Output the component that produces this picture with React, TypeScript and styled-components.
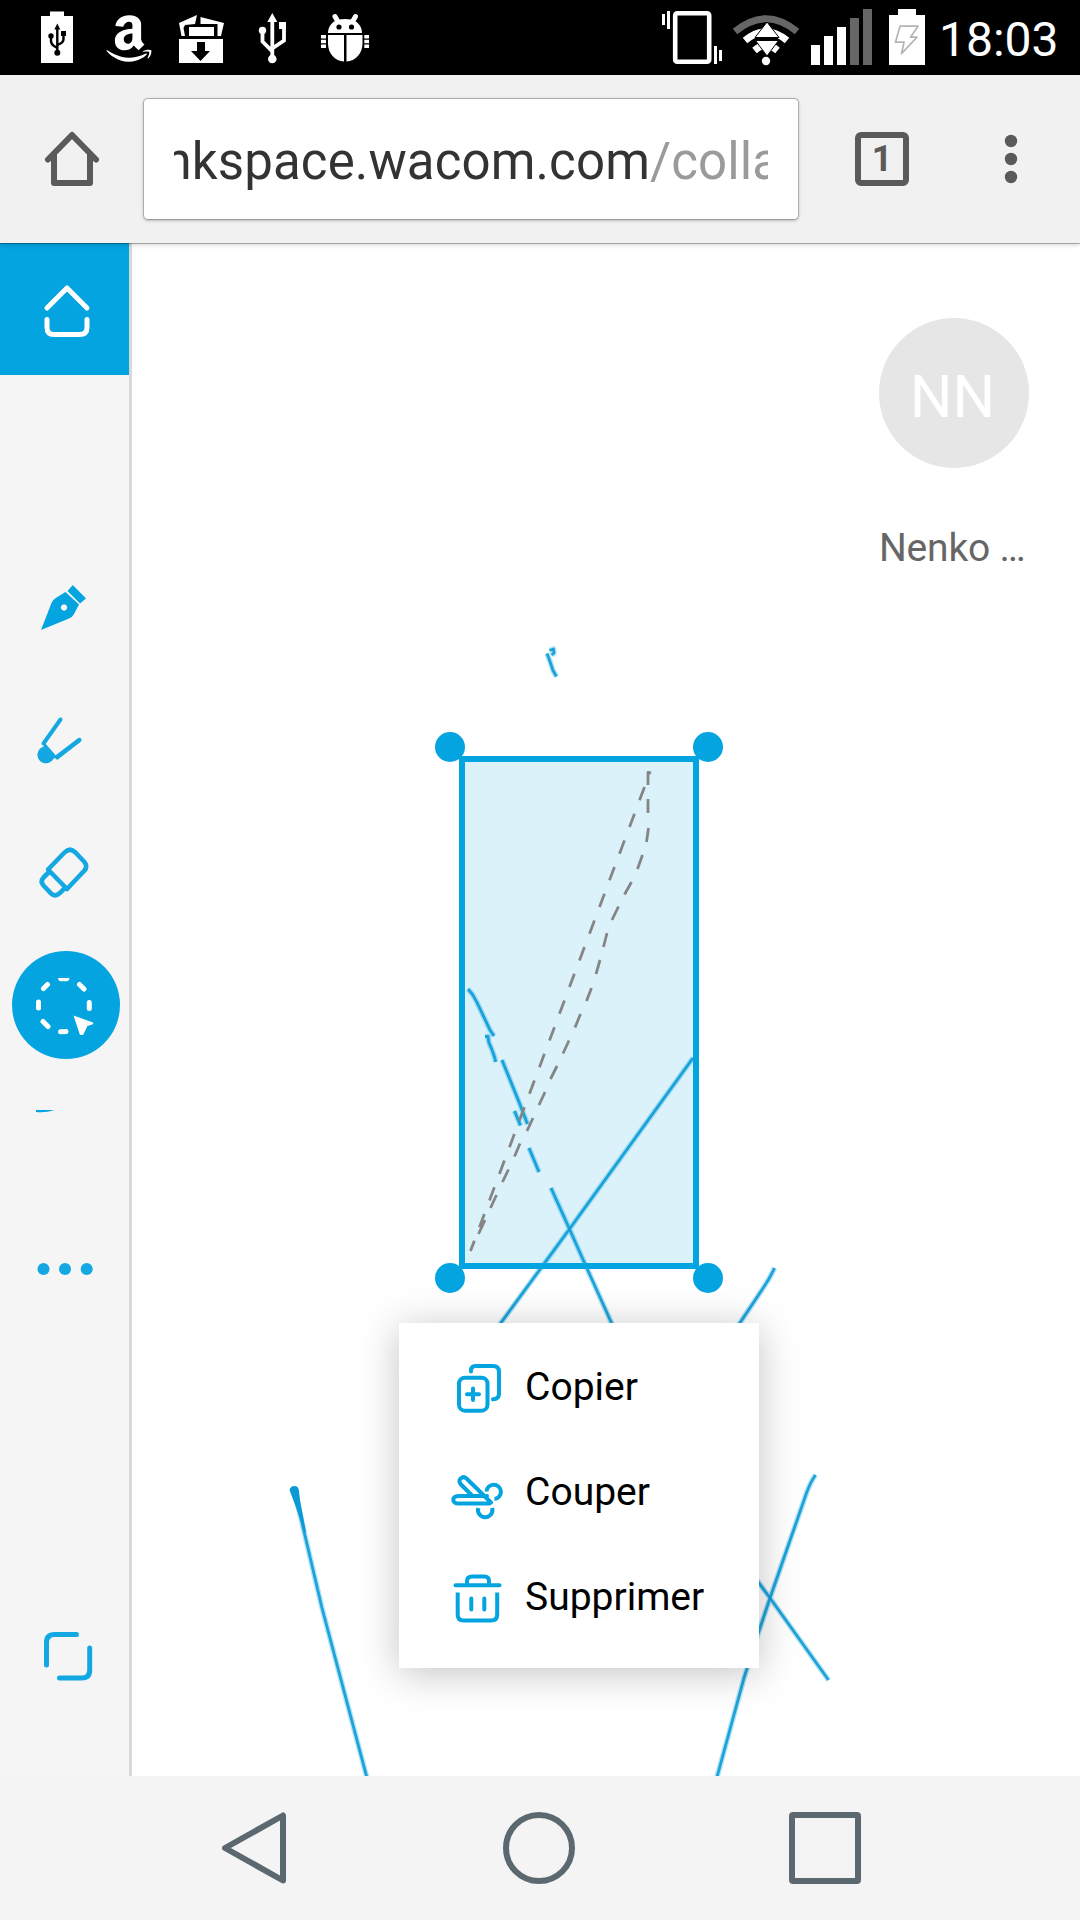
import React from "react";
import styled, { createGlobalStyle } from "styled-components";
import { FaAmazon } from "react-icons/fa";

const BLUE = "#04a4e0";

const GlobalStyle = createGlobalStyle`
  * { box-sizing: border-box; }
  body { margin: 0; background: #fff; font-family: Roboto, "Noto Sans", sans-serif; }
  button { border: 0; padding: 0; background: none; font: inherit; }
  svg { display: block; flex: none; }
`;

const Screen = styled.div`
  width: 1080px;
  height: 1920px;
  display: flex;
  flex-direction: column;
  overflow: hidden;
`;

const StatusBar = styled.header`
  height: 75px;
  flex: none;
  display: flex;
  justify-content: space-between;
  background: #000;
  color: #fff;
`;

const StatusGroup = styled.div`
  display: flex;
  align-items: flex-start;
`;

const AmazonSlot = styled.div`
  width: 72px;
  height: 75px;
  flex: none;
  display: flex;
  align-items: flex-start;
  justify-content: center;
  padding: 12px 24px 0 0;

  svg {
    width: 50px;
    height: 53px;
  }
`;

const Clock = styled.time`
  width: 142px;
  padding-left: 1px;
  font-size: 48px;
  line-height: 79px;
  white-space: nowrap;
`;

const Toolbar = styled.div`
  height: 168px;
  flex: none;
  display: flex;
  align-items: center;
  background: #f1f1f1;
  box-shadow: 0 1px 0 rgba(0, 0, 0, 0.25), 0 1px 5px rgba(0, 0, 0, 0.25);
  position: relative;
  z-index: 2;
`;

const ToolbarButton = styled.button<{ $width: number }>`
  width: ${(p) => p.$width}px;
  height: 168px;
  display: flex;
  align-items: center;
  justify-content: center;
`;

const AddressBar = styled.div`
  width: 656px;
  height: 122px;
  padding: 0 30px;
  display: flex;
  align-items: center;
  background: #fff;
  border: 1px solid #adadad;
  border-bottom-color: #999;
  border-radius: 5px;
  box-shadow: 0 1px 3px rgba(0, 0, 0, 0.22);
`;

const UrlWindow = styled.div`
  flex: 1;
  overflow: hidden;
  white-space: nowrap;
  font-size: 51px;
  letter-spacing: 0.12px;
  line-height: 70px;
  color: #333;
  padding-top: 6px;
`;

const UrlText = styled.div`
  margin-left: -23px;
`;

const UrlPath = styled.span`
  color: #9a9a9a;
`;

const TabCount = styled.div`
  width: 54px;
  height: 54px;
  display: flex;
  align-items: center;
  justify-content: center;
  border: 6px solid #5a5a5a;
  border-radius: 6px;
  color: #5a5a5a;
  font-size: 36px;
  font-weight: 700;
  line-height: 42px;
`;

const Workspace = styled.main`
  flex: 1;
  display: flex;
  min-height: 0;
`;

const Sidebar = styled.nav`
  width: 132px;
  flex: none;
  display: flex;
  flex-direction: column;
  background: #f5f5f5;
  border-right: 3px solid #d8d8d8;
`;

const ToolButton = styled.button<{ $height: number; $active?: boolean }>`
  width: 129px;
  height: ${(p) => p.$height}px;
  flex: none;
  background: ${(p) => (p.$active ? BLUE : "transparent")};
`;

const SidebarGap = styled.div<{ $height: number }>`
  height: ${(p) => p.$height}px;
  flex: none;
`;

const Board = styled.section`
  flex: 1;
  position: relative;
  background: #fff;
`;

const Drawing = styled.svg`
  position: absolute;
  inset: 0;
`;

const Profile = styled.div`
  width: 150px;
  margin: 75px 51px 0 auto;
  display: flex;
  flex-direction: column;
  gap: 55px;
`;

const Avatar = styled.div`
  width: 150px;
  height: 150px;
  border-radius: 50%;
  display: flex;
  align-items: center;
  justify-content: center;
  padding: 8px 3px 0 0;
  background: #e6e6e6;
  color: #fff;
  font-size: 60px;
  line-height: 70px;
`;

const UserName = styled.div`
  color: #666;
  font-size: 39px;
  letter-spacing: -0.2px;
  line-height: 50px;
  white-space: nowrap;
`;

const Selection = styled.div`
  position: absolute;
  left: 327px;
  top: 513px;
  width: 240px;
  height: 513px;
  border: 6px solid ${BLUE};
`;

const Handle = styled.i<{ $right?: boolean; $bottom?: boolean }>`
  position: absolute;
  ${(p) => (p.$right ? "right" : "left")}: -30px;
  ${(p) => (p.$bottom ? "bottom" : "top")}: -30px;
  width: 30px;
  height: 30px;
  border-radius: 50%;
  background: ${BLUE};
`;

const ContextMenu = styled.div`
  position: absolute;
  left: 267px;
  top: 1080px;
  width: 360px;
  height: 345px;
  padding: 12px 0 0 48px;
  background: #fff;
  box-shadow: 0 5px 38px rgba(0, 0, 0, 0.24);
`;

const MenuItem = styled.button`
  width: 100%;
  height: 105px;
  display: flex;
  align-items: center;
  gap: 18px;
  color: #000;
  font-size: 39px;
  line-height: 51px;
`;

const NavBar = styled.footer`
  height: 144px;
  flex: none;
  display: flex;
  align-items: center;
  justify-content: center;
  gap: 214px;
  padding-right: 2px;
  background: #f4f4f4;
`;

const UsbBattery = () => (
  <svg width="105" height="75" viewBox="0 0 105 75">
    <path d="M50 11.5h14V16h9v47H41V16h9z" fill="#fff" />
    <g fill="none" stroke="#000" strokeWidth="2.4">
      <path d="M57.3 28v25M51 37v4q0 3 3 5l3.3 2M63.5 34v5q0 3-3 4.500l-3.200 1.500" />
    </g>
    <g fill="#000">
      <path d="M57.300 23.500l3 6h-6zM61 31h5v5h-5z" />
      <circle cx="51" cy="36" r="2.700" />
      <circle cx="57.300" cy="52.700" r="3" />
    </g>
  </svg>
);

const DownloadBox = () => (
  <svg width="60" height="75" viewBox="177 0 60 75">
    <g fill="#fff">
      <path d="M179 23l18-8-2 9-10 1-1.500 3L185 36h-3.500zM200.500 17l23.500 6-3 13h-3.500V24h-17z" />
      <path d="M189 27h25v9h-25zM179 39h44v24h-44z" />
    </g>
    <path d="M197 42h8v9h5l-9.500 10-9.500-10h6z" fill="#000" />
  </svg>
);

const UsbIcon = () => (
  <svg width="77" height="75" viewBox="237 0 77 75">
    <g fill="none" stroke="#fff" strokeWidth="3.800">
      <path d="M272.300 20v38M262.500 31v10.500l9.800 9.800M284 27v13.500l-11.700 8" />
    </g>
    <g fill="#fff">
      <path d="M272.300 13l5 9h-10zM279 22h7v7h-7z" />
      <circle cx="262.500" cy="30.500" r="3.700" />
      <circle cx="272.300" cy="59" r="4.300" />
    </g>
  </svg>
);

const BugIcon = () => (
  <svg width="56" height="75" viewBox="314 0 56 75">
    <g stroke="#fff" strokeWidth="5" strokeLinecap="round">
      <path d="M335 16.500l3.500 6M355.500 16.500l-3.500 6" />
    </g>
    <g fill="#fff">
      <path d="M328 33c0-8 6-12.500 11-13.500 4-.8 8-.8 12 0 5 1 11 5.500 11 13.500z" />
      <path d="M328 35h16v26.500c-9-.5-16-8-16-18zM346.500 35h16v8.500c0 10-7 17.500-16 18z" />
      <path d="M321 35h5v3.500h-5zM321 39.800h5v3.500h-5zM321 44.600h5V48h-5zM364.300 35h4.700v3.500h-4.700zM364.300 39.800h4.700v3.500h-4.700zM364.300 44.600h4.700V48h-4.700z" />
    </g>
    <circle cx="339" cy="27" r="2.600" />
    <circle cx="351.500" cy="27" r="2.600" />
  </svg>
);

const SystemIcons = () => (
  <svg width="282" height="75" viewBox="656 0 282 75">
    <rect x="675.200" y="13.200" width="34" height="48.600" rx="2" fill="none" stroke="#fff" strokeWidth="4.600" />
    <path d="M662 14h3v11h-3zM667 11h3v18h-3zM714 46h3v18h-3zM719 50h3v11h-3z" fill="#fff" />
    <path d="M735 31.500q31-25.500 62 0" fill="none" stroke="#666" strokeWidth="7" />
    <path d="M745 40.500q21-17.500 42 0" fill="none" stroke="#fff" strokeWidth="7" />
    <path d="M754.500 50.500q11.500-10 23 0" fill="none" stroke="#fff" strokeWidth="7" />
    <path d="M756 37.500h22v3.500h-22z" />
    <path d="M767 22l12 15.500h-24zM755.500 40.500h23L767 56z" fill="#fff" stroke="#000" />
    <circle cx="766" cy="61" r="4.200" fill="#fff" />
    <path d="M811 45h9v20h-9zM824 36h9v29h-9zM837 27h9v38h-9z" fill="#fff" />
    <path d="M850 18h9v47h-9zM863 9h9v56h-9z" fill="#666" />
    <path d="M898 9h18v6h9v50h-36V15h9z" fill="#fff" />
    <path d="M900 26.200h18l-7.500 11h6.500l-15.500 16.500 2.500-11.500h-8.500z" fill="none" stroke="#b5b5b5" strokeWidth="1.700" strokeLinejoin="round" />
  </svg>
);

const StrokeIcon = styled.svg.attrs({ fill: "none", strokeLinecap: "round", strokeLinejoin: "round" })<{
  $color?: string;
}>`
  stroke: ${(p) => p.$color ?? "#14a8e2"};
`;

const CopyIcon = () => (
  <StrokeIcon $color={BLUE} width="60" height="57" viewBox="447 1359 60 57" strokeWidth="4">
    <rect x="459" y="1377.700" width="28.500" height="33" rx="6" />
    <path d="M471 1371.500v-1q0-4.500 4.500-4.500h17.500q6 0 6 6v22q0 5-6 5.300" />
    <path d="M473 1388.500v11.500M467 1394.300h12" />
  </StrokeIcon>
);

const CutIcon = () => (
  <StrokeIcon $color={BLUE} width="60" height="57" viewBox="447 1464 60 57" strokeWidth="4">
    <path d="M491 1502.500l-24.500-24c-4-3.500-9.500 1.500-6 5.500l11.500 11.500M487 1496h-28.500c-7 0-7 7.500 0 7.500h31" />
    <path d="M486.500 1491.500a7.200 7.200 0 1 1 8 7.500M478.300 1508a7.200 7.200 0 1 0 13.800 0" strokeLinecap="butt" />
  </StrokeIcon>
);

const TrashIcon = () => (
  <StrokeIcon $color={BLUE} width="60" height="57" viewBox="447 1569 60 57" strokeWidth="4">
    <path d="M455.500 1585.300h44M467 1584v-3q0-4.500 5-4.500h12.500q4.500 0 4.500 4.500v3" />
    <path d="M457.700 1592.500v22q0 6 6 6h27.500q6 0 6-6v-22" strokeLinecap="butt" />
    <path d="M471.300 1598.500v11M484.300 1598.500v11" />
  </StrokeIcon>
);

const HomeTool = () => (
  <StrokeIcon $color="#fff" width="129" height="132" viewBox="0 243 129 132" strokeWidth="5">
    <path d="M47 308l20-20 20 20M47 319.500v8q0 7 7 7h25.500q7.500 0 7.500-7v-8" />
  </StrokeIcon>
);

const PenTool = () => (
  <svg width="129" height="134" viewBox="0 540 129 134" fill={BLUE}>
    <path fillRule="evenodd" d="M41 630l10.500-27q1.500-3.500 5-5.500l9-5.500L79 604.500l-5 9.500q-1.500 3-5 4.500zM64 604.300a3.200 3.200 0 1 0 .1 0z" />
    <path d="M72.800 585L86 598.400l-6 5.100L67.500 591z" />
  </svg>
);

const BrushTool = () => (
  <StrokeIcon width="129" height="132" viewBox="0 674 129 132" strokeWidth="4">
    <path d="M60.500 719.500L43.500 743.500M57.500 757.300L79.500 740" />
    <path d="M57 757L79 740.200" strokeWidth="4.500" />
    <path d="M44.500 742.500l12.500 14.200-3.500 2a8.500 8.500 0 1 1-10-12z" fill="#14a8e2" stroke="none" />
  </StrokeIcon>
);

const EraserTool = () => (
  <StrokeIcon width="129" height="134" viewBox="0 806 129 134" strokeWidth="4.600">
    <path d="M48 869.500l16.500-17q5.500-5.500 11 0l8.500 9q4.500 5 0 9.500l-17 18z" />
    <path d="M49.500 871.500l-6 6q-3.500 4 0 8l7.500 7.800q4 4 8.500 0l5.500-5.300" />
  </StrokeIcon>
);

const SelectTool = () => (
  <svg width="129" height="130" viewBox="0 940 129 130">
    <circle cx="66" cy="1005" r="54" fill={BLUE} />
    <g stroke="#fff" strokeWidth="5" strokeLinecap="round" fill="none">
      <path d="M60.500 1031.800l5.500-.2M38.500 1002v6M89.300 1002.500v6M79.500 984.500l4.500 4.500M47.500 984.500l-4 4M43 1021.500l5 5" />
    </g>
    <path d="M58 978h11.500q-.5 3.200-3 3.200h-5.500q-2.500 0-3-3.200z" fill="#fff" />
    <path d="M73.500 1015.500l19.500 7q.8 2-1 2l-4.500 1.500-4.500 9h-3z" fill="#fff" />
  </svg>
);

const LineTool = () => (
  <svg width="129" height="133" viewBox="0 1070 129 133" fill={BLUE}>
    <path d="M36 1110h18.500q-9 3-18.500 2z" />
  </svg>
);

const MoreTool = () => (
  <svg width="129" height="132" viewBox="0 1203 129 132" fill="#14a8e2">
    <circle cx="43.500" cy="1269" r="6" />
    <circle cx="65" cy="1269" r="6" />
    <circle cx="86.700" cy="1269" r="6" />
  </svg>
);

const ExpandTool = () => (
  <StrokeIcon width="129" height="132" viewBox="0 1590 129 132" strokeWidth="5">
    <path d="M76.500 1634.600H54.500q-8 0-8 8V1665M89.700 1648v22q0 8-8 8H59.500" />
  </StrokeIcon>
);

const inkStrokes = [
  "M547 653.500l3 8 3 9 3.500 6M549.500 650.500l4-1.500.5 4-2.500 2",
  "M468 989q5.500 5.500 9 13.500L490 1030l4 6M485 1036.500l3 0q0 6 3.500 12l3.500 10 .5 3.500M502 1060l17 42 8.500 22M514.500 1111l6 14.500M529 1148l10 24",
  "M551 1188L569.500 1229L585 1264L612 1324",
  "M693 1058L569.500 1229L500 1324",
  "M774.500 1268q-5 11-12 21l-24 36",
  "M815.500 1475q-5 7-9 18L770 1598L758 1634L744 1678L717 1777",
  "M735 1550L770 1598L828.500 1680",
  "M295 1493L322 1608L367 1778",
];

// Start and end of every dash of the lasso's freehand side.
const lassoDashes = [
  [648, 799, 648, 813],
  [648.5, 828, 646.5, 842],
  [642.5, 855, 637.5, 869],
  [631.5, 882, 624.5, 894.5],
  [618.5, 906.5, 612, 920],
  [607, 933, 603.5, 947],
  [600, 960, 596, 974],
  [591.5, 988, 586.5, 1001],
  [580.5, 1014, 575, 1027.5],
  [569, 1040.5, 563, 1053.5],
  [557, 1066, 550.5, 1079],
  [545, 1092, 539, 1105],
  [533, 1118, 527, 1131],
  [520, 1143.5, 514.5, 1156.500],
  [508.5, 1169.5, 502.5, 1182],
  [496.5, 1195, 490.5, 1208],
  [485, 1220, 478.5, 1234],
];

const lassoPath =
  "M651 773l-3-.5v12.500" + lassoDashes.map(([x1, y1, x2, y2]) => `M${x1} ${y1}L${x2} ${y2}`).join("");

const BoardDrawing = () => (
  <Drawing width="948" height="1533" viewBox="132 243 948 1533" fill="none" strokeLinejoin="round">
    <g stroke={BLUE} strokeWidth="5.500" opacity="0.3">
      {inkStrokes.map((d) => (
        <path key={d} d={d} />
      ))}
    </g>
    <g stroke="#0c9ad6" strokeWidth="2.800" strokeOpacity="0.9">
      {inkStrokes.map((d) => (
        <path key={d} d={d} />
      ))}
    </g>
    <path d="M289.500 1490q1-4 5-4 4 0 4.500 5l1 9 6 32h-1.500l-9-26z" fill="#0c9ad6" />
    <rect x="459" y="756" width="240" height="513" fill={BLUE} fillOpacity="0.14" />
    <g stroke="#858585" strokeWidth="2.800">
      <path d={lassoPath} />
      <path d="M644.500 787L470.500 1251" strokeDasharray="14.200 14.300" />
    </g>
  </Drawing>
);

const menuItems = [
  { label: "Copier", Icon: CopyIcon },
  { label: "Couper", Icon: CutIcon },
  { label: "Supprimer", Icon: TrashIcon },
];

export default function App() {
  return (
    <Screen>
      <GlobalStyle />
      <StatusBar>
        <StatusGroup>
          <UsbBattery />
          <AmazonSlot>
            <FaAmazon />
          </AmazonSlot>
          <DownloadBox />
          <UsbIcon />
          <BugIcon />
        </StatusGroup>
        <StatusGroup>
          <SystemIcons />
          <Clock>18:03</Clock>
        </StatusGroup>
      </StatusBar>
      <Toolbar>
        <ToolbarButton $width={143} aria-label="Home">
          <StrokeIcon $color="#5a5a5a" width="60" height="60" viewBox="42 129 60 60" strokeWidth="6">
            <path d="M48 159.500L72 135l24 24.500M54 155v28h36v-28" />
          </StrokeIcon>
        </ToolbarButton>
        <AddressBar>
          <UrlWindow>
            <UrlText>
              inkspace.wacom.com<UrlPath>/colla</UrlPath>
            </UrlText>
          </UrlWindow>
        </AddressBar>
        <ToolbarButton $width={166} aria-label="Tabs">
          <TabCount>1</TabCount>
        </ToolbarButton>
        <ToolbarButton $width={92} aria-label="Menu">
          <svg width="14" height="52" fill="#5a5a5a">
            <circle cx="7" cy="8" r="6.200" />
            <circle cx="7" cy="26" r="6.200" />
            <circle cx="7" cy="44" r="6.200" />
          </svg>
        </ToolbarButton>
      </Toolbar>
      <Workspace>
        <Sidebar>
          <ToolButton $height={132} $active><HomeTool /></ToolButton>
          <SidebarGap $height={165} />
          <ToolButton $height={134}><PenTool /></ToolButton>
          <ToolButton $height={132}><BrushTool /></ToolButton>
          <ToolButton $height={134}><EraserTool /></ToolButton>
          <ToolButton $height={130}><SelectTool /></ToolButton>
          <ToolButton $height={133}><LineTool /></ToolButton>
          <ToolButton $height={132}><MoreTool /></ToolButton>
          <SidebarGap $height={255} />
          <ToolButton $height={132}><ExpandTool /></ToolButton>
        </Sidebar>
        <Board>
          <BoardDrawing />
          <Profile>
            <Avatar>NN</Avatar>
            <UserName>Nenko …</UserName>
          </Profile>
          <Selection>
            <Handle />
            <Handle $right />
            <Handle $bottom />
            <Handle $right $bottom />
          </Selection>
          <ContextMenu>
            {menuItems.map(({ label, Icon }) => (
              <MenuItem key={label}>
                <Icon />
                {label}
              </MenuItem>
            ))}
          </ContextMenu>
        </Board>
      </Workspace>
      <NavBar>
        <StrokeIcon $color="#5c6870" width="72" height="76" viewBox="217 1810 72 76" strokeWidth="6">
          <path d="M283 1815.500v65l-58-32.500z" />
        </StrokeIcon>
        <svg width="72" height="72" fill="none" stroke="#5c6870" strokeWidth="6">
          <circle cx="36" cy="36" r="33" />
        </svg>
        <svg width="72" height="72" fill="none" stroke="#5c6870" strokeWidth="6">
          <rect x="3" y="3" width="66" height="66" rx="1" />
        </svg>
      </NavBar>
    </Screen>
  );
}
